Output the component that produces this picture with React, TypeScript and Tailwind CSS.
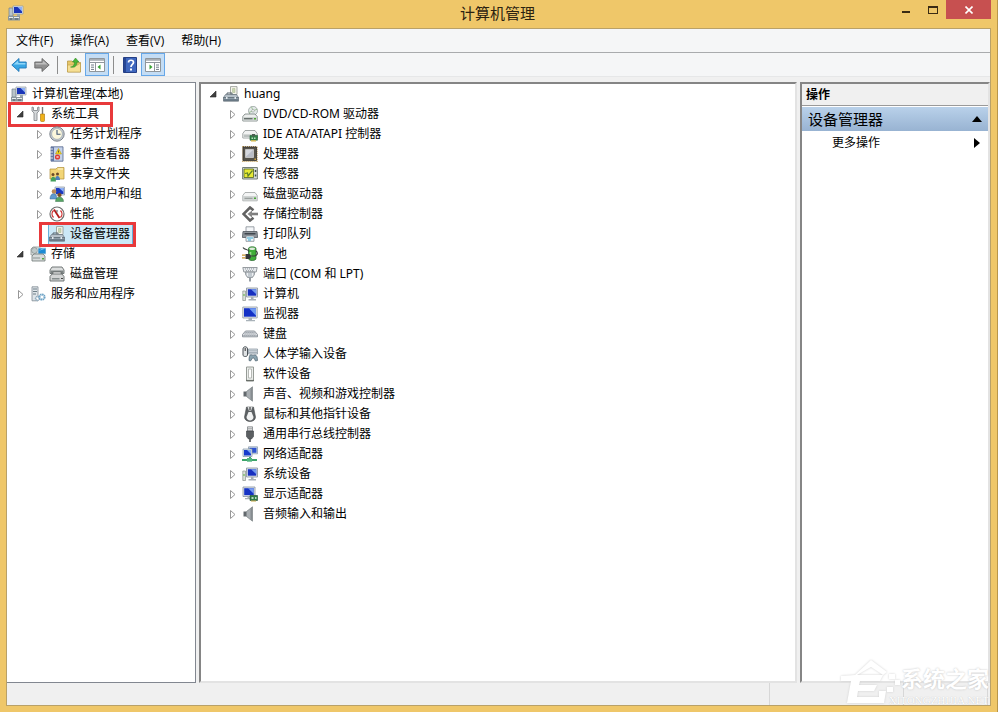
import React, { useState } from 'react';
import clsx from 'clsx';

const art: Record<string, React.ReactNode> = {
  console: (
    <>
      <path d="M1 3h4v8H1z" fill="#b9c4c9" stroke="#73828b" strokeWidth=".7" />
      <path d="M5 1h10v8H5z" fill="#dfe5ea" stroke="#8d99a3" strokeWidth=".7" />
      <path d="M6 2h8v6H6z" fill="#1a35b8" />
      <path d="M9.5 2H14v4.5z" fill="#8fb0f4" />
      <path d="M9 9h3v2H9z" fill="#9aa5ad" />
      <path d="M0 11h12v4.5H0z" fill="#8b979e" />
      <path d="M1 12h4v1H1zM6 12h5v1H6z" fill="#e8eeee" />
      <path d="M2 13.5h2v1H2zM7 13.5h3v1H7z" fill="#4d5f6a" />
    </>
  ),
  tools: (
    <>
      <path d="M2 1v4l2 2v7.5h3V7l2-2V1L7.5 1.5v3h-4v-3z" fill="#d5d8da" stroke="#7c8286" strokeWidth=".8" />
      <path d="M11.8 1h1.4v7h-1.4z" fill="#777" />
      <path d="M10.5 8h4v6.5a1 1 0 0 1-1 1h-2a1 1 0 0 1-1-1z" fill="#f0b21a" stroke="#a97405" strokeWidth=".6" />
    </>
  ),
  clock: (
    <>
      <circle cx="8" cy="8" r="7.2" fill="#c6ccd2" stroke="#6f7780" strokeWidth=".9" />
      <circle cx="8" cy="8" r="5.4" fill="#fbf7dc" stroke="#8a98a8" strokeWidth=".6" />
      <path d="M8 4v4.3h3.5" stroke="#3d5575" strokeWidth="1.1" fill="none" />
    </>
  ),
  events: (
    <>
      <path d="M2 .8h12v14.4H2z" fill="#c4d2ea" stroke="#53648c" strokeWidth=".8" />
      <path d="M2 1h3v14H2z" fill="#6478a5" />
      <path d="M1 3h3M1 6h3M1 9h3M1 12h3" stroke="#e3e7ef" strokeWidth="1" />
      <path d="m9.5 2.5 3 5.5h-6z" fill="#f6d81f" stroke="#a98d0b" strokeWidth=".5" />
      <path d="M9.5 4.5v2" stroke="#333" strokeWidth=".8" />
      <circle cx="8.5" cy="11" r="2.6" fill="#dd3c35" />
      <path d="m7.5 10 2 2m0-2-2 2" stroke="#fff" strokeWidth=".7" />
    </>
  ),
  share: (
    <>
      <path d="M1 3h6l1.500-1.500H15V13H1z" fill="#f2d576" stroke="#b08e36" strokeWidth=".7" />
      <path d="M9 3h5" stroke="#fff7d6" />
      <circle cx="4" cy="8.500" r="1.500" fill="#6b4a26" />
      <circle cx="8.500" cy="8" r="1.500" fill="#6b4a26" />
      <path d="M6 14c0-5.500 5-5.500 5 0z" fill="#4b80bd" />
      <path d="M1.500 15.500c0-6.500 5.500-6.500 5.500 0z" fill="#45a05c" />
    </>
  ),
  users: (
    <>
      <path d="M6 1h9.500v8H6z" fill="#dae1ea" stroke="#8692a2" strokeWidth=".7" />
      <path d="M7 2h7.500v6H7z" fill="#1c39c0" />
      <path d="M10 2h4.500v4z" fill="#8db1f5" />
      <circle cx="5" cy="5.500" r="2.300" fill="#ba8958" />
      <path d="M1 13c0-7 7-7 7 0z" fill="#5f9ad0" stroke="#386490" strokeWidth=".5" />
      <circle cx="10.500" cy="9" r="2.100" fill="#7b4a26" />
      <path d="M6.500 15.500c0-6 8-6 8 0z" fill="#57a564" stroke="#38734a" strokeWidth=".5" />
    </>
  ),
  gauge: (
    <>
      <circle cx="8" cy="8" r="7" fill="#fff" stroke="#6d6d6d" strokeWidth="1.200" />
      <path d="M4.500 11.500a5 5 0 0 1 0-7M11.500 4.500a5 5 0 0 1 0 7" fill="none" stroke="#ce3030" strokeWidth="1.300" />
      <path d="m5 3.500 5.500 8.500" stroke="#b31b1b" strokeWidth="1.800" />
      <path d="M8 4v2.500" stroke="#555" />
    </>
  ),
  device: (
    <>
      <path d="M7.500.6h6.500V8.500H7.500z" fill="#f7f6ed" stroke="#91958f" strokeWidth=".8" />
      <path d="M9.500 2.500H12v4H9.500z" fill="#c9d6b3" stroke="#a5b58c" strokeWidth=".5" />
      <path d="M4 8.500V7h5v1.500" fill="none" stroke="#53606a" strokeWidth="1" />
      <path d="M2.500 8.500h11l2 3H.5z" fill="#b5c0c8" stroke="#64717b" strokeWidth=".7" />
      <path d="M.5 11.500h15v3.700H.5z" fill="#6f7f8b" stroke="#515e68" strokeWidth=".6" />
      <path d="M1 12.300h14" stroke="#a9b7c1" strokeWidth=".7" />
      <path d="M3 11h1.500v2H3zM11.500 11H13v2h-1.500z" fill="#e4eaee" />
    </>
  ),
  storage: (
    <>
      <path d="M1 3 3 1h7v8H1z" fill="#e3e6e6" stroke="#8b9291" strokeWidth=".8" />
      <circle cx="4.500" cy="4.500" r="3" fill="#bec8c8" stroke="#747e7e" strokeWidth=".6" />
      <path d="M8 2h8v6H8z" fill="#1d8bd4" stroke="#c9d5dc" strokeWidth=".8" />
      <path d="m8.500 5 4-2.500h3z" fill="#83cdf2" />
      <path d="m2 10 2-2h9l2 2v5H2z" fill="#d6dada" stroke="#707877" strokeWidth=".8" />
      <path d="M3 12h7" stroke="#8b9493" />
      <path d="M12 12h2v1.500h-2z" fill="#4ea63c" />
    </>
  ),
  disks: (
    <>
      <path d="m1 4 2-3h10l2 3v3.500H1z" fill="#dcdede" stroke="#656b6b" strokeWidth=".9" />
      <path d="M1.500 4.500h13V7h-13z" fill="#7b8282" />
      <path d="M4 8V6h8v2" fill="#f1f1f1" stroke="#656b6b" strokeWidth=".7" />
      <path d="m1 10.500 2-2.500h10l2 2.500V15H1z" fill="#d3d5d5" stroke="#656b6b" strokeWidth=".9" />
      <path d="M3 12h7.500v1.500H3z" fill="#858d8d" />
      <path d="M12 12h2v1h-2z" fill="#444" />
    </>
  ),
  services: (
    <>
      <path d="M2 .8h6v14H2z" fill="#dfe5e9" stroke="#7d8992" strokeWidth=".8" />
      <path d="M3 3h4M3 5.500h4M3 8h3" stroke="#6f7f88" />
      <circle cx="7.500" cy="12.500" r="1.900" fill="#fff" stroke="#8da8bc" strokeWidth="1.600" strokeDasharray="1.200 .5" />
      <circle cx="12" cy="11" r="2.600" fill="#fff" stroke="#6ea3c6" strokeWidth="2" strokeDasharray="1.500 .5" />
    </>
  ),
  dvd: (
    <>
      <circle cx="11" cy="4.800" r="4.500" fill="#e3e9e8" stroke="#95a09d" strokeWidth=".8" />
      <path d="m11 4.800-1.500-4M11 4.800l4-1.500M11 4.800 7 6.500" stroke="#9dbf95" strokeWidth="1" />
      <circle cx="11" cy="4.800" r="1.300" fill="#fff" stroke="#8b9492" strokeWidth=".6" />
      <path d="m.8 10.500 2.200-2.500h10l2.200 2.500V15H.8z" fill="#eceeed" stroke="#747d7b" strokeWidth=".8" />
      <path d="M1.200 11h13.600v3.600H1.200z" fill="#cdd2d0" />
      <path d="M2 12.700h8.500" stroke="#5c6563" strokeWidth="1.200" />
      <path d="M12 12h2v1.500h-2z" fill="#50a834" />
    </>
  ),
  ide: (
    <>
      <path d="m.8 7.500 2.200-3h10l2.200 3V12H.8z" fill="#f2f3f3" stroke="#8a9190" strokeWidth=".8" />
      <path d="M1.200 8h13.600v3.600H1.200z" fill="#d3d7d6" />
      <path d="M2 10h6" stroke="#a2a9a8" />
      <path d="M8 9.500h7.500v4.700H8z" fill="#318448" stroke="#195d2d" strokeWidth=".6" />
      <path d="M10 8h3v2.500h-3z" fill="#4b5f52" />
      <path d="M9 14.200v1.300h5v-1.300" fill="#d6b645" />
      <path d="M9.500 11.500h1.500V13H9.500zM12 11.500h1.500V13H12z" fill="#b9dfc0" />
    </>
  ),
  cpu: (
    <>
      <path d="M1 .8h14v14.400H1z" fill="none" stroke="#b28c43" strokeWidth="1.400" strokeDasharray="1 1" />
      <path d="M1 1h13.500v13.500H1z" fill="#55534b" stroke="#35342e" strokeWidth=".8" />
      <path d="M3.500 3.500h8v8h-8z" fill="#b9bdc6" stroke="#e9e9e6" strokeWidth=".6" />
      <path d="M4 4h7l-7 6.500z" fill="#d5d8de" />
      <path d="M12.500 12.500H14V14h-1.500z" fill="#d0a33a" />
    </>
  ),
  sensor: (
    <>
      <path d="M.6 1.500h14.800v11.500H.6z" fill="#d6dcda" stroke="#66716c" strokeWidth=".9" />
      <path d="M2 3h9.500v8.500H2z" fill="#e7ea35" stroke="#526221" strokeWidth=".8" />
      <path d="m3 7.500 2.500-.5.500 3L10.500 4.500" fill="none" stroke="#5d7f2b" strokeWidth="1.200" />
      <path d="M12.800 4h1.500v2h-1.500zM12.800 8.500h1.500v2h-1.500z" fill="#3d4e46" />
    </>
  ),
  drive: (
    <>
      <path d="m.8 9.500 2.200-3h10l2.200 3v5.300H.8z" fill="#f4f5f5" stroke="#9aa09f" strokeWidth=".8" />
      <path d="M1.200 10h13.600v4.400H1.200z" fill="#cfd3d2" />
      <path d="M2.500 12.300h8" stroke="#8c9492" />
      <path d="M12 11.500h2V13h-2z" fill="#48a936" />
    </>
  ),
  storctl: (
    <>
      <path d="M11.500 4.300 8 1.500 1.500 8 8 14.500l3.500-2.800" fill="none" stroke="#626262" strokeWidth="2.600" />
      <path d="M9 6.700h7v2.600H9z" fill="#7e7e7e" />
      <path d="M5.500 8 10 4.500v7z" fill="#858585" />
    </>
  ),
  printer: (
    <>
      <path d="M4 .8h8V6H4z" fill="#f4f6f8" stroke="#858c94" strokeWidth=".8" />
      <path d="M1 5.500h14l.6 6H.4z" fill="#8f959b" stroke="#545a61" strokeWidth=".8" />
      <path d="M2.500 7h11v1.500h-11z" fill="#3f454c" />
      <path d="M4 10h8v5.300H4z" fill="#eff7fb" stroke="#727c84" strokeWidth=".7" />
      <path d="M5 12h6M6 14h3" stroke="#39a4cd" />
    </>
  ),
  battery: (
    <>
      <path d="M6.500 2.500C6.500.3 14 .3 14 2.500v10c0 2.700-7.500 2.700-7.500 0z" fill="#3fae3a" stroke="#235e27" strokeWidth=".7" />
      <ellipse cx="10.200" cy="2.800" rx="3" ry="1.300" fill="#e1eadf" />
      <path d="M8.500 6v5" stroke="#9ade8c" strokeWidth="1.600" />
      <path d="M1 1.500c2 3 5 1 6 4M14 5c2.500 2 1 5-2 5H8" fill="none" stroke="#373d3c" strokeWidth="1.200" />
      <path d="M3.500 8H7c2.500 0 2.500 5 0 5H3.500z" fill="#343839" />
      <path d="M0 9.200h3.500M0 11.800h3.500" stroke="#c8952c" strokeWidth="1.300" />
    </>
  ),
  port: (
    <>
      <path d="M.8 1.500h14.400l-1 4.500H1.800z" fill="#e6e9ec" stroke="#7f858b" strokeWidth=".8" />
      <path d="M3 2.900h10M4 4.700h8" stroke="#8f989f" strokeDasharray="1 1" />
      <path d="M3.500 6h9v2.500L10.500 11.500h-5L3.500 8.500z" fill="#c3cad0" stroke="#7f858b" strokeWidth=".7" />
      <path d="M5.500 7v3M10.500 7v3" stroke="#eef0f2" />
      <path d="M7 11.500h2v4H7z" fill="#969da4" />
    </>
  ),
  computer: (
    <>
      <path d="M.8 5h2.700v9.500H.8z" fill="#dce1db" stroke="#8b938e" strokeWidth=".7" />
      <path d="M1.500 8h1v2h-1z" fill="#5ab43e" />
      <path d="M4.500 2h11v9h-11z" fill="#e2e6ec" stroke="#858f9a" strokeWidth=".8" />
      <path d="M5.800 3.200h8.500v6.500H5.800z" fill="#1830c0" />
      <path d="M9 3.200h5.300v5z" fill="#7198ee" />
      <path d="M9 11h2.500v2H9zM6.500 13h7.500v1.500H6.500z" fill="#a8b0b7" />
    </>
  ),
  monitor: (
    <>
      <path d="M.8 1h14.400v11H.8z" fill="#e4e8ed" stroke="#9199a2" strokeWidth=".8" />
      <path d="M2 2.200h12v8.500H2z" fill="#1431c6" />
      <path d="M7 2.200h7v7.500z" fill="#6f9af2" />
      <path d="M6.500 12h3.500v2H6.500zM4 14h9v1.300H4z" fill="#a9b2b9" />
    </>
  ),
  keyboard: (
    <>
      <path d="m3.500 5h9L15.500 8.500v2.300H.5V8.500z" fill="#dde0e4" stroke="#777e86" strokeWidth=".8" />
      <path d="M3.500 6.500h9M2.500 8h11M1.500 9.500h13" stroke="#8b929a" strokeDasharray="1.200 .8" />
    </>
  ),
  hid: (
    <>
      <path d="M1 3c0-3 4.500-3 4.500 0v6c0 2-4.500 2-4.500 0z" fill="#e0e3e5" stroke="#4a5156" strokeWidth="1" />
      <path d="M3.200 2v3" stroke="#333" />
      <path d="M6.500 3h9v5h-9z" fill="#d6dde4" stroke="#84909b" strokeWidth=".7" />
      <path d="M7.500 4.800h7M7.500 6.500h7" stroke="#77838e" strokeDasharray="1 1" />
      <path d="M7 14.500c0-7 2-6 4-5 2-1 4.500-1 4.500 5l-2 .5-1.500-3h-1.500L8.500 15z" fill="#8aa3b0" stroke="#4e626e" strokeWidth=".7" />
    </>
  ),
  software: (
    <>
      <path d="M4.500 1h7v14h-7z" fill="#eceeec" stroke="#8b908b" strokeWidth=".9" />
      <path d="M6.500 3h3v9h-3z" fill="#fff" stroke="#a7aba6" strokeWidth=".8" />
      <path d="M4 14.500h8" stroke="#696e69" strokeWidth="1.200" />
    </>
  ),
  speaker: (
    <>
      <path d="M1.500 5.500h3v5h-3z" fill="#62686c" />
      <path d="M4.500 5.500 10.500.8v14.400l-6-4.700z" fill="#a9aeb2" stroke="#767c80" strokeWidth=".7" />
      <path d="M8.500 3v10l1.500 1.500v-13z" fill="#868c90" />
    </>
  ),
  mouse: (
    <>
      <path d="M4.500 1h7L13.500 11c0 6-11 6-11 0z" fill="#5d6164" stroke="#34383b" strokeWidth=".5" />
      <path d="M6.500 6h3l2 5c0 4.500-7 4.500-7 0z" fill="#f1f2f2" />
      <path d="M5.500 1 7 5h2l1.500-4z" fill="#dcdfe0" />
      <path d="M8 1v3.500" stroke="#222" />
    </>
  ),
  usb: (
    <>
      <path d="M5.500.8h5V5h-5z" fill="#e3e5e6" stroke="#7d8285" strokeWidth=".8" />
      <path d="M6.500 2.300h1v1h-1zM8.500 2.300h1v1h-1z" fill="#666" />
      <path d="M4.500 5h7v5.500L9.500 13h-3l-2-2.500z" fill="#5b5f62" stroke="#3d4144" strokeWidth=".6" />
      <path d="M7.200 13h1.600v3H7.200z" fill="#4b4f52" />
    </>
  ),
  network: (
    <>
      <path d="M6.500.8h9v7h-9z" fill="#dbe4ec" stroke="#7f92a4" strokeWidth=".7" />
      <path d="M7.500 1.800h7v5h-7z" fill="#2d53cf" />
      <path d="M1 3h9v7.500H1z" fill="#dfe7ee" stroke="#7f92a4" strokeWidth=".7" />
      <path d="M2 4h7v5.500H2z" fill="#173bcc" />
      <path d="M5 4h4v4z" fill="#80a9f3" />
      <path d="M7 11h2v2H7z" fill="#3da46a" />
      <path d="M0 13h15v2H0z" fill="#3da46a" />
      <path d="M5 12h5v3.700H5z" fill="#52b57e" />
    </>
  ),
  display: (
    <>
      <path d="M1 1h12v9.500H1z" fill="#e2e7ed" stroke="#87919c" strokeWidth=".8" />
      <path d="M2.200 2.200h9.600v7H2.200z" fill="#1532c4" />
      <path d="M6 2.200h5.800v5.500z" fill="#789cf0" />
      <path d="M5.500 10.500h2v1.500h-2zM3 12h5v1.300H3z" fill="#a8b0b7" />
      <path d="M8 9.500h7.500v5H8z" fill="#2f7b48" stroke="#194e2b" strokeWidth=".6" />
      <path d="M9.500 11h2v2h-2zM13 11h1.500v2H13z" fill="#b9dcc0" />
      <path d="M9 14.500h5v1H9z" fill="#c4a646" />
    </>
  ),
  back: (
    <>
      <path d="M.8 8 8 1.500V5h7.200v6H8v3.500z" fill="#39a6e4" stroke="#2177b6" strokeWidth=".9" />
      <path d="M2.500 7.500 7.200 3.500V6h7.200v1.500z" fill="#8fd5f7" />
    </>
  ),
  forward: (
    <>
      <path d="M15.200 8 8 1.500V5H.8v6H8v3.500z" fill="#909090" stroke="#686868" strokeWidth=".9" />
      <path d="M13.500 7.500 8.800 3.500V6H1.600v1.500z" fill="#bdbdbd" />
    </>
  ),
  folderUp: (
    <>
      <path d="M1.500 4H6l1.500 1.500h7V15h-13z" fill="#e6c668" stroke="#b2913c" strokeWidth=".7" />
      <path d="M1.500 15V8h10l3-2v9z" fill="#f6df94" stroke="#b2913c" strokeWidth=".5" />
      <path d="M4.500 10C8 9.500 8.500 7 8.500 5H6.500L9.500 1l3.500 4h-2c0 4-2 6-6.500 5z" fill="#49b536" stroke="#2a8420" strokeWidth=".5" />
    </>
  ),
  paneLeft: (
    <>
      <path d="M.5 1.500h15v13H.5z" fill="#fff" stroke="#8f969c" />
      <path d="M1 2h14v1.800H1z" fill="#a8aeb4" />
      <path d="M1 5.500h14M6.500 6v8" stroke="#8f969c" />
      <path d="M2 8h3M2 10.200h3M2 12.400h3" stroke="#6f7a86" />
      <path d="M11.500 7.500v5L8.500 10z" fill="#39a334" />
    </>
  ),
  paneRight: (
    <>
      <path d="M.5 1.500h15v13H.5z" fill="#fff" stroke="#8f969c" />
      <path d="M1 2h14v1.800H1z" fill="#a8aeb4" />
      <path d="M1 5.500h14M9.500 6v8" stroke="#8f969c" />
      <path d="M11 8h3M11 10.200h3M11 12.400h3" stroke="#6f7a86" />
      <path d="M4.500 7.500v5l3-2.500z" fill="#39a334" />
    </>
  ),
  help: (
    <>
      <path d="M1.500.5h13v15h-13z" fill="#3f67be" stroke="#243f86" />
      <path d="M2 1h2v14H2z" fill="#274693" />
      <path d="M6.500 5.500c0-3 5-3 5 0 0 2-2.500 2-2.500 4.500" fill="none" stroke="#fff" strokeWidth="1.700" />
      <path d="M8 11.500h2v2H8z" fill="#fff" />
    </>
  )
};

const Icon: React.FC<{ name: string }> = ({ name }) => (
  <svg viewBox="0 0 16 16" className="w-4 h-4 shrink-0" aria-hidden="true">
    {art[name]}
  </svg>
);

interface Node {
  label: string;
  icon: string;
  children?: Node[];
  expandable?: boolean;
  marked?: boolean;
  selected?: boolean;
}

const tools: Node[] = [
  {
    label: '系统工具',
    icon: 'tools',
    marked: true,
    children: [
      { label: '任务计划程序', icon: 'clock', expandable: true },
      { label: '事件查看器', icon: 'events', expandable: true },
      { label: '共享文件夹', icon: 'share', expandable: true },
      { label: '本地用户和组', icon: 'users', expandable: true },
      { label: '性能', icon: 'gauge', expandable: true },
      { label: '设备管理器', icon: 'device', marked: true, selected: true }
    ]
  },
  { label: '存储', icon: 'storage', children: [{ label: '磁盘管理', icon: 'disks' }] },
  { label: '服务和应用程序', icon: 'services', expandable: true }
];

const devices: Node[] = [
  {
    label: 'huang',
    icon: 'device',
    children: [
      { label: 'DVD/CD-ROM 驱动器', icon: 'dvd', expandable: true },
      { label: 'IDE ATA/ATAPI 控制器', icon: 'ide', expandable: true },
      { label: '处理器', icon: 'cpu', expandable: true },
      { label: '传感器', icon: 'sensor', expandable: true },
      { label: '磁盘驱动器', icon: 'drive', expandable: true },
      { label: '存储控制器', icon: 'storctl', expandable: true },
      { label: '打印队列', icon: 'printer', expandable: true },
      { label: '电池', icon: 'battery', expandable: true },
      { label: '端口 (COM 和 LPT)', icon: 'port', expandable: true },
      { label: '计算机', icon: 'computer', expandable: true },
      { label: '监视器', icon: 'monitor', expandable: true },
      { label: '键盘', icon: 'keyboard', expandable: true },
      { label: '人体学输入设备', icon: 'hid', expandable: true },
      { label: '软件设备', icon: 'software', expandable: true },
      { label: '声音、视频和游戏控制器', icon: 'speaker', expandable: true },
      { label: '鼠标和其他指针设备', icon: 'mouse', expandable: true },
      { label: '通用串行总线控制器', icon: 'usb', expandable: true },
      { label: '网络适配器', icon: 'network', expandable: true },
      { label: '系统设备', icon: 'computer', expandable: true },
      { label: '显示适配器', icon: 'display', expandable: true },
      { label: '音频输入和输出', icon: 'speaker', expandable: true }
    ]
  }
];

const TreeItem: React.FC<{ node: Node }> = ({ node }) => {
  const [open, setOpen] = useState(!!node.children);
  const canToggle = node.expandable || node.children;

  return (
    <li>
      <div className="relative flex items-center h-5 w-max">
        {canToggle ? (
          <button
            type="button"
            aria-label={node.label}
            aria-expanded={open}
            onClick={() => setOpen(!open)}
            className="w-4 h-5 mr-0.5 flex items-center justify-center"
          >
            <svg viewBox="0 0 8 10" className="w-2 h-2.5" aria-hidden="true">
              {open ? (
                <path d="M7 2v6H1z" fill="#404040" stroke="#262626" strokeWidth=".6" />
              ) : (
                <path d="M2.500 1.500v8l4.500-4z" fill="#fff" stroke="#979797" />
              )}
            </svg>
          </button>
        ) : (
          <span className="w-4 mr-0.5" />
        )}
        <span
          className={clsx(
            'flex items-center h-5 gap-[5px] pr-0.5',
            node.selected && 'bg-[#cbe8f6] outline outline-1 outline-[#66afd9]'
          )}
        >
          <Icon name={node.icon} />
          <span className="whitespace-nowrap">{node.label}</span>
        </span>
        {node.marked && (
          <span
            className={clsx(
              'absolute -top-0.5 -bottom-[3px] border-3 border-[#e8393b] pointer-events-none',
              node.selected ? 'left-2 -right-1' : '-left-1 -right-3'
            )}
          />
        )}
      </div>
      {open && node.children && (
        <ul className="pl-[19px]">
          {node.children.map(child => (
            <TreeItem key={child.label} node={child} />
          ))}
        </ul>
      )}
    </li>
  );
};

const ToolButton: React.FC<{ icon: string; label: string; active?: boolean }> = ({ icon, label, active }) => (
  <button
    type="button"
    aria-label={label}
    className={clsx(
      'h-[23px] flex items-center justify-center border',
      active ? 'w-6 bg-[#c4ddf5] border-[#66a7e8]' : 'w-[23px] border-transparent'
    )}
  >
    <Icon name={icon} />
  </button>
);

const menus = ['文件(F)', '操作(A)', '查看(V)', '帮助(H)'];

const sunken = 'border-2 border-t-[#858585] border-l-[#858585] border-r-[#e3e3e3] border-b-[#e3e3e3] bg-white';

const App: React.FC = () => {
  return (
    <div className="relative h-screen flex flex-col bg-[#efc769] pl-1.5 pr-[6px] pb-1.5 border-r border-[#b8964a] text-black text-xs font-['Open_Sans','Noto_Sans_CJK_SC',sans-serif]">
      <header className="relative h-7 shrink-0 flex items-start">
        <div className="pt-[5px] pl-0.5">
          <Icon name="console" />
        </div>
        <h1 className="absolute inset-x-0 top-px pr-0.5 text-center text-[15px] leading-6 text-[#2b2210] pointer-events-none">
          计算机管理
        </h1>
        <div className="ml-auto flex">
          <button type="button" aria-label="最小化" className="w-[27px] h-[19px] flex items-center justify-center pt-1">
            <span className="w-2 h-0.5 bg-[#3a2b14]" />
          </button>
          <button type="button" aria-label="最大化" className="w-[27px] h-[19px] flex items-center justify-center">
            <span className="w-2.5 h-2 border border-t-2 border-[#3a2b14]" />
          </button>
          <button type="button" aria-label="关闭" className="w-[45px] h-[19px] flex items-center justify-center bg-[#c75050]">
            <svg viewBox="0 0 8 8" className="w-2 h-2" aria-hidden="true">
              <path d="m.5.5 7 7m0-7-7 7" stroke="#fff" strokeWidth="1.600" />
            </svg>
          </button>
        </div>
      </header>

      <div className="flex-1 min-h-0 flex flex-col bg-[#f0f0f0] outline outline-1 -outline-offset-1 outline-[#b9a168]">
        <nav className="h-[24px] shrink-0 flex items-center gap-px pl-px bg-[#f5f6f7] border-b border-[#a9abad] mx-px mt-px">
          {menus.map(menu => (
            <button key={menu} type="button" className="px-2">
              {menu}
            </button>
          ))}
        </nav>

        <div className="h-[24px] shrink-0 flex items-center bg-[#f5f6f7] border-b border-[#e6e7e8] mx-px">
          <ToolButton icon="back" label="后退" />
          <ToolButton icon="forward" label="前进" />
          <span className="w-px h-[18px] bg-[#8d8d8d] mx-1" />
          <ToolButton icon="folderUp" label="向上一级" />
          <ToolButton icon="paneLeft" label="显示/隐藏控制台树" active />
          <span className="w-px h-[18px] bg-[#8d8d8d] mx-1" />
          <ToolButton icon="help" label="帮助" />
          <ToolButton icon="paneRight" label="显示/隐藏操作窗格" active />
        </div>

        <main className="flex-1 min-h-0 flex gap-[3px] pt-[5px] pr-px">
          <aside className="w-[190px] shrink-0 bg-white border border-[#828790] pt-px">
            <div className="flex items-center h-5 gap-[5px] pl-1">
              <Icon name="console" />
              <span>计算机管理(本地)</span>
            </div>
            <ul className="pl-[5px]">
              {tools.map(node => (
                <TreeItem key={node.label} node={node} />
              ))}
            </ul>
          </aside>

          <section className={clsx("flex-1 min-w-0 pl-1 font-['Noto_Sans','Noto_Sans_CJK_SC',sans-serif]", sunken)}>
            <ul>
              {devices.map(node => (
                <TreeItem key={node.label} node={node} />
              ))}
            </ul>
          </section>

          <aside className={clsx('w-[190px] shrink-0', sunken)}>
            <h2 className="h-[22px] flex items-center pl-1 font-bold bg-[#f0f0f0] border-b border-[#9a9a9a]">操作</h2>
            <button
              type="button"
              className="w-full h-6 mt-px flex items-center justify-between pl-1.5 pr-1.5 text-[15px] bg-linear-to-b from-[#b9d1ea] to-[#98b3d2]"
            >
              设备管理器
              <svg viewBox="0 0 10 6" className="w-2.5 h-1.5" aria-hidden="true">
                <path d="M5 0l5 6H0z" />
              </svg>
            </button>
            <button type="button" className="w-full h-6 flex items-center justify-between pl-[30px] pr-2">
              更多操作
              <svg viewBox="0 0 6 10" className="w-1.5 h-2.5" aria-hidden="true">
                <path d="M0 0l6 5-6 5z" />
              </svg>
            </button>
          </aside>
        </main>

        <footer className="h-[23px] shrink-0 flex justify-end pr-[3px] pb-px">
          <span className="w-[134px] border-l border-[#d7d7d7]" />
          <span className="w-[85px] border-x border-[#d7d7d7]" />
        </footer>
      </div>

      <div className="absolute right-2 bottom-1.5 flex items-end pointer-events-none text-white">
        <svg viewBox="0 0 60 46" className="w-[60px] h-[46px] -mr-3 drop-shadow-[0_0_1px_#d0d0d0]" aria-hidden="true">
          <path
            d="M0 16 14 15 30 0l16 12-4 3-12-8L16 15h26l-3 6H19l-1 4h18l-3 6H17l-1 6h22v-6h7l-2 12H6l4-22H0zM48 14h6v5h-6zM54 20h5v5h-5zM46 27h6v5h-6z"
            fill="#fff"
          />
        </svg>
        <div className="flex flex-col items-end">
          <span className="text-[22px] leading-8 font-bold [text-shadow:0_0_2px_#bdbdbd]">系统之家</span>
          <span className="text-[11px] leading-3 font-['Liberation_Serif',serif] [text-shadow:0_0_1px_#b5b5b5]">
            XITONGZHIJIA.NET
          </span>
        </div>
      </div>
    </div>
  );
};

export default App;
